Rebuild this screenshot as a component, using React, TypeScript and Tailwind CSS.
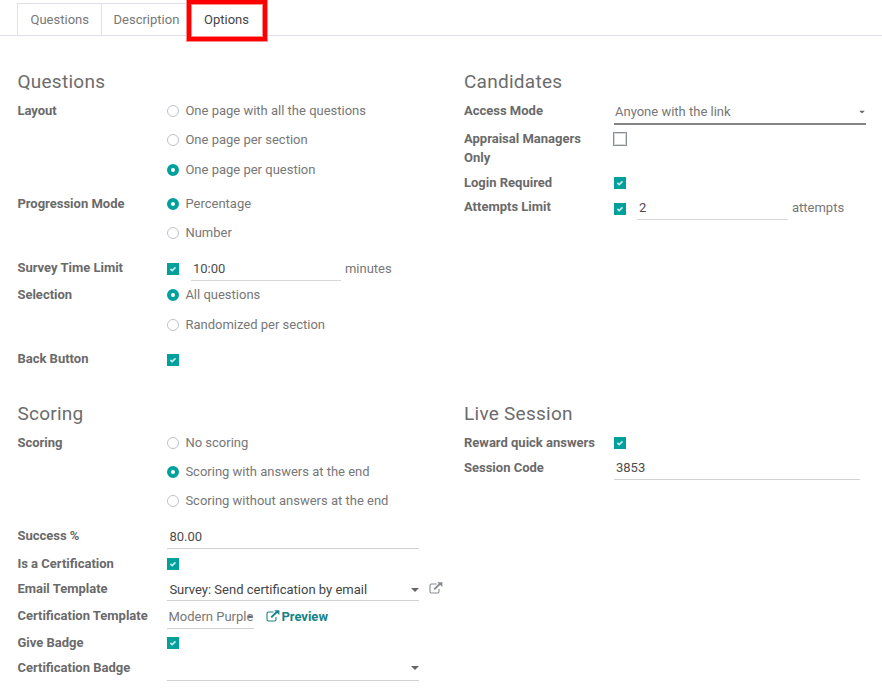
import type { ReactNode } from "react";

function Radio({ checked, children, className = "" }: { checked?: boolean; children: ReactNode; className?: string }) {
  return (
    <div className={`flex h-5 items-center gap-1.5 ${className}`}>
      <span
        className={`size-3 shrink-0 rounded-full bg-white ${
          checked ? "border-[4px] border-[#00a09d]" : "border border-[#bcc3c9]"
        }`}
      />
      <span>{children}</span>
    </div>
  );
}

function Check({ className = "" }: { className?: string }) {
  return (
    <span className={`flex size-3 shrink-0 items-center justify-center bg-[#00a09d] ${className}`}>
      <svg viewBox="0 0 12 12" className="size-3" fill="none" stroke="#c4ebea" strokeWidth="1.7">
        <path d="M3.4 6 5.2 7.6 8.5 4.3" />
      </svg>
    </span>
  );
}

function Caret({ className = "" }: { className?: string }) {
  return (
    <svg viewBox="0 0 8 4" className={`h-1 w-2 shrink-0 ${className}`} fill="#666">
      <path d="M0 0h8L4 4z" />
    </svg>
  );
}

function External({ color, className = "" }: { color: string; className?: string }) {
  return (
    <svg viewBox="0 0 14 12" className={`h-3 w-3.5 shrink-0 ${className}`} fill="none" stroke={color}>
      <path d="M7.5 2H2.4Q1 2 1 3.4v6.2Q1 11 2.4 11h6.2Q10 11 10 9.6V7" strokeWidth="1.1" />
      <path d="M5.2 7.4 11 1.8" strokeWidth="1.9" />
      <path d="M8.2.2H13.4v4.8z" fill={color} stroke="none" />
    </svg>
  );
}

function Row({ label, className, children }: { label: ReactNode; className: string; children?: ReactNode }) {
  return (
    <div className={`flex items-start ${className}`}>
      <div className="w-[150px] shrink-0 font-bold leading-5 text-[#6a6a6a]">{label}</div>
      {children}
    </div>
  );
}

function Heading({ children }: { children: ReactNode }) {
  return <h2 className="mb-[7px] h-6 text-[19px] leading-6 tracking-[0.27px] text-[#6c6c6c]">{children}</h2>;
}

export default function App() {
  return (
    <div className="relative h-[690px] w-[882px] overflow-hidden whitespace-nowrap bg-white font-['Roboto',sans-serif] text-[13px] text-[#777]">
      <nav className="flex h-9 border-b border-[#dee2e6] pl-[17px] pt-[3px] leading-[31px]">
        <div className="w-[84px] border-l border-t border-[#dee2e6] pl-[12.5px]">Questions</div>
        <div className="w-[87px] border-l border-t border-[#dee2e6] pl-[11.5px]">Description</div>
        <div className="h-[33px] w-[75px] bg-white pl-4 pt-px text-[#444]">Options</div>
      </nav>
      <div className="absolute left-[187px] top-0 h-[41px] w-20 border-4 border-[#fe0000] shadow-[0_0_0_1px_#ff8c8c,inset_0_0_0_1px_#ff8c8c]" />

      <main className="flex pl-[17.4px] pt-[34px]">
        <div className="w-[446.6px]">
          <section className="h-[332px]">
            <Heading>Questions</Heading>
            <Row label="Layout" className="h-[93px]">
              <div>
                <Radio>One page with all the questions</Radio>
                <Radio className="mt-[9px]">One page per section</Radio>
                <Radio checked className="mt-2.5">One page per question</Radio>
              </div>
            </Row>
            <Row label="Progression Mode" className="h-16">
              <div>
                <Radio checked>Percentage</Radio>
                <Radio className="mt-[9px]">Number</Radio>
              </div>
            </Row>
            <Row label="Survey Time Limit" className="h-[27px]">
              <Check className="mt-[5px]" />
              <div className="ml-[11.5px] h-[23px] w-[150px] border-b border-[#d8d8d8] pl-0.5 pt-px leading-5 text-[#4c4c4c]">10:00</div>
              <span className="ml-1 mt-px leading-5">minutes</span>
            </Row>
            <Row label="Selection" className="h-16">
              <div>
                <Radio checked>All questions</Radio>
                <Radio className="mt-2.5">Randomized per section</Radio>
              </div>
            </Row>
            <Row label="Back Button" className="h-5">
              <Check className="mt-[5px]" />
            </Row>
          </section>

          <section>
            <Heading>Scoring</Heading>
            <Row label="Scoring" className="h-[93px]">
              <div>
                <Radio>No scoring</Radio>
                <Radio checked className="mt-[9px]">Scoring with answers at the end</Radio>
                <Radio className="mt-[9px]">Scoring without answers at the end</Radio>
              </div>
            </Row>
            <Row label="Success %" className="h-7">
              <div className="h-[23px] w-[252px] border-b border-[#d2d2d2] pl-0.5 pt-px leading-5 text-[#4c4c4c]">80.00</div>
            </Row>
            <Row label="Is a Certification" className="h-[25px]">
              <Check className="mt-1" />
            </Row>
            <Row label="Email Template" className="h-[27px]">
              <div className="flex h-[22px] w-[252px] items-center justify-between border-b border-[#d2d2d2] pl-0.5 text-[#444]">
                <span>Survey: Send certification by email</span>
                <Caret />
              </div>
              <External color="#858b91" className="ml-2.5 mt-[3px]" />
            </Row>
            <Row label="Certification Template" className="h-[27px]">
              <div className="flex h-[23px] w-[87px] items-center border-b border-[#d2d2d2] pl-px">
                <span>Modern Purple</span>
                <Caret className="-ml-[7px] scale-75" />
              </div>
              <External color="#168286" className="ml-3 mt-1" />
              <span className="ml-px mt-px font-bold leading-5 text-[#168286]">Preview</span>
            </Row>
            <Row label="Give Badge" className="h-[25px]">
              <Check className="mt-1" />
            </Row>
            <Row label="Certification Badge" className="h-6">
              <div className="flex h-[23px] w-[252px] items-center justify-end border-b border-[#d2d2d2]">
                <Caret className="-mt-0.5" />
              </div>
            </Row>
          </section>
        </div>

        <div className="flex-1">
          <section className="h-[332px]">
            <Heading>Candidates</Heading>
            <Row label="Access Mode" className="h-7">
              <div className="flex h-6 w-[252px] items-center justify-between border-b-2 border-[#858585] pl-px">
                <span>Anyone with the link</span>
                <Caret className="scale-75" />
              </div>
            </Row>
            <Row label={<>Appraisal Managers<br />Only</>} className="h-[44px] [&>div]:leading-[19px]">
              <span className="-ml-px mt-[3px] size-3.5 border-[1.5px] border-[#888e92] bg-white shadow-[inset_0_0_0_1px_#d5d8da]" />
            </Row>
            <Row label="Login Required" className="h-6">
              <Check className="mt-1" />
            </Row>
            <Row label="Attempts Limit" className="h-7">
              <Check className="mt-1.5" />
              <div className="ml-[11px] h-[23px] w-[151px] border-b border-[#d8d8d8] pl-0.5 pt-px leading-5 text-[#4c4c4c]">2</div>
              <span className="ml-1 mt-px leading-5">attempts</span>
            </Row>
          </section>
          <section>
            <Heading>Live Session</Heading>
            <Row label="Reward quick answers" className="h-[25px]">
              <Check className="mt-1" />
            </Row>
            <Row label="Session Code" className="h-7">
              <div className="h-[22px] w-[246px] border-b border-[#d2d2d2] pl-0.5 leading-5 text-[#4c4c4c]">3853</div>
            </Row>
          </section>
        </div>
      </main>
    </div>
  );
}
